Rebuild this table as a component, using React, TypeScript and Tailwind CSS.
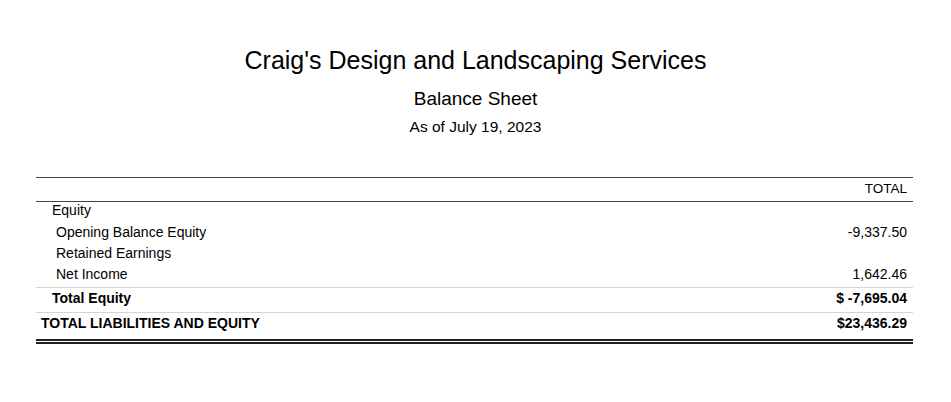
import React from "react";

export default function App() {
  const f = { fontFamily: '"Liberation Sans", Arial, sans-serif' };
  return (
    <div className="w-[951px] h-[402px] bg-white text-black" style={f}>
      <div className="flex flex-col items-center pt-[44px]">
        <div className="text-[25px] leading-[32px]">Craig's Design and Landscaping Services</div>
        <div className="text-[19px] leading-[24px] mt-[11px]">Balance Sheet</div>
        <div className="text-[15.5px] leading-[20px] mt-[6px]">As of July 19, 2023</div>
      </div>
      <div className="ml-[36px] w-[877px] mt-[40px] text-[14px]">
        <div className="border-t border-[#444] border-b h-[25px] flex items-center justify-end pr-[6px] text-[13.5px]">TOTAL</div>
        <div className="h-[20px] flex items-center pl-[16px] pb-[3px]">Equity</div>
        <div className="h-[21px] flex items-center justify-between pl-[20px] pr-[6px]">
          <span>Opening Balance Equity</span>
          <span>-9,337.50</span>
        </div>
        <div className="h-[21px] flex items-center justify-between pl-[20px] pr-[6px]">
          <span>Retained Earnings</span>
          <span></span>
        </div>
        <div className="h-[23px] flex items-center justify-between pl-[20px] pr-[6px] pb-[2px]">
          <span>Net Income</span>
          <span>1,642.46</span>
        </div>
        <div className="border-t border-[#d4d4d4] h-[25px] flex items-center justify-between pl-[16px] pr-[6px] font-bold pb-[3px]">
          <span>Total Equity</span>
          <span>$ -7,695.04</span>
        </div>
        <div className="border-t border-[#d4d4d4] h-[27px] flex items-center justify-between pl-[5px] pr-[6px] font-bold pb-[5px]">
          <span>TOTAL LIABILITIES AND EQUITY</span>
          <span>$23,436.29</span>
        </div>
        <div className="border-t-2 border-b-2 border-[#222] h-[5px]"></div>
      </div>
    </div>
  );
}
